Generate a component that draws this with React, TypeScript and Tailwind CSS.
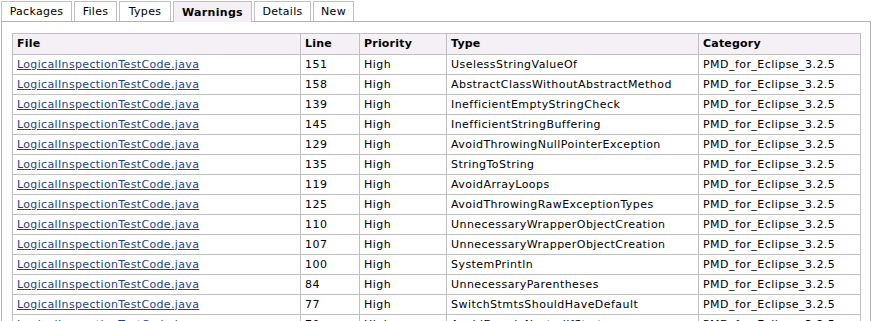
import React from "react";

const rows: [string, string, string, string][] = [
  ["151", "High", "UselessStringValueOf", "PMD_for_Eclipse_3.2.5"],
  ["158", "High", "AbstractClassWithoutAbstractMethod", "PMD_for_Eclipse_3.2.5"],
  ["139", "High", "InefficientEmptyStringCheck", "PMD_for_Eclipse_3.2.5"],
  ["145", "High", "InefficientStringBuffering", "PMD_for_Eclipse_3.2.5"],
  ["129", "High", "AvoidThrowingNullPointerException", "PMD_for_Eclipse_3.2.5"],
  ["135", "High", "StringToString", "PMD_for_Eclipse_3.2.5"],
  ["119", "High", "AvoidArrayLoops", "PMD_for_Eclipse_3.2.5"],
  ["125", "High", "AvoidThrowingRawExceptionTypes", "PMD_for_Eclipse_3.2.5"],
  ["110", "High", "UnnecessaryWrapperObjectCreation", "PMD_for_Eclipse_3.2.5"],
  ["107", "High", "UnnecessaryWrapperObjectCreation", "PMD_for_Eclipse_3.2.5"],
  ["100", "High", "SystemPrintln", "PMD_for_Eclipse_3.2.5"],
  ["84", "High", "UnnecessaryParentheses", "PMD_for_Eclipse_3.2.5"],
  ["77", "High", "SwitchStmtsShouldHaveDefault", "PMD_for_Eclipse_3.2.5"],
  ["70", "High", "AvoidDeeplyNestedIfStmts", "PMD_for_Eclipse_3.2.5"],
];

const tabs = [
  { label: "Packages", w: "w-[71px]" },
  { label: "Files", w: "w-[43px]" },
  { label: "Types", w: "w-[52px]" },
  { label: "Warnings", w: "w-[79px]", active: true },
  { label: "Details", w: "w-[57px]" },
  { label: "New", w: "w-[41px]" },
];

const grid = "grid grid-cols-[288px_59px_87px_252px_162px]";
const cell = "border-r border-[#c0c0c0] pl-[4px] whitespace-nowrap overflow-hidden flex items-center";

export default function App() {
  return (
    <div
      className="bg-white text-black text-[11px] pl-px pt-px"
      style={{ fontFamily: '"DejaVu Sans", Verdana, sans-serif' }}
    >
      <div className="flex gap-[2px] items-end relative z-10">
        {tabs.map((t) => (
          <div
            key={t.label}
            className={
              t.active
                ? `${t.w} h-[21px] -mb-px border border-b-0 border-[#c0c0c0] bg-[#f5f0f5] font-bold flex items-center justify-center leading-none`
                : `${t.w} h-[20px] border border-b-0 border-[#c0c0c0] bg-white flex items-center justify-center leading-none`
            }
          >
            <span className="tracking-[0.3px]">{t.label}</span>
          </div>
        ))}
      </div>
      <div className="w-[870px] border border-[#b4b4b4] pl-[10px] pr-[9px] pt-[11px] pb-[12px]">
        <div className="border-l border-t border-[#c0c0c0]">
          <div className={`${grid} h-[21px] bg-[#f5f0f5] border-b border-[#c0c0c0] font-bold`}>
            {["File", "Line", "Priority", "Type", "Category"].map((h) => (
              <div key={h} className={`${cell} tracking-[0.2px]`}>
                {h}
              </div>
            ))}
          </div>
          {rows.map((r, i) => (
            <div key={i} className={`${grid} h-[20px] border-b border-[#c0c0c0]`}>
              <div className={`${cell} pt-px`}>
                <a href="#" className="text-[#1d4380] underline tracking-[0.35px]">
                  LogicalInspectionTestCode.java
                </a>
              </div>
              <div className={`${cell} pt-px tracking-[0.45px]`}>{r[0]}</div>
              <div className={`${cell} pt-px tracking-[0.45px]`}>{r[1]}</div>
              <div className={`${cell} pt-px tracking-[0.45px]`}>{r[2]}</div>
              <div className={`${cell} pt-px tracking-[0.45px]`}>{r[3]}</div>
            </div>
          ))}
        </div>
      </div>
    </div>
  );
}
